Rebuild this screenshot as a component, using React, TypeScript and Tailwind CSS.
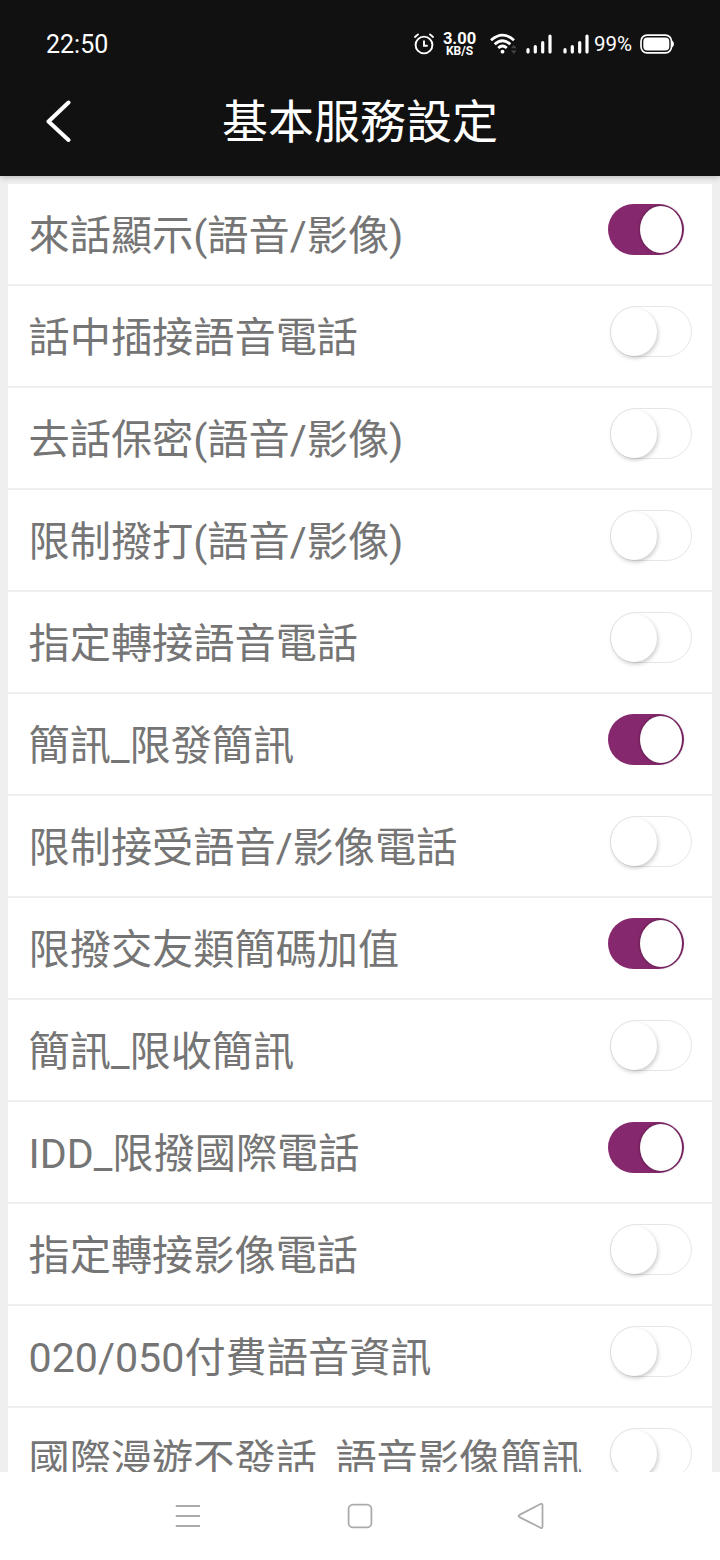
interface Service {
  id: number;
  name: string;
  enabled: boolean;
}

const services: Service[] = [
  { id: 1, name: "來話顯示(語音/影像)", enabled: true },
  { id: 2, name: "話中插接語音電話", enabled: false },
  { id: 3, name: "去話保密(語音/影像)", enabled: false },
  { id: 4, name: "限制撥打(語音/影像)", enabled: false },
  { id: 5, name: "指定轉接語音電話", enabled: false },
  { id: 6, name: "簡訊_限發簡訊", enabled: true },
  { id: 7, name: "限制接受語音/影像電話", enabled: false },
  { id: 8, name: "限撥交友類簡碼加值", enabled: true },
  { id: 9, name: "簡訊_限收簡訊", enabled: false },
  { id: 10, name: "IDD_限撥國際電話", enabled: true },
  { id: 11, name: "指定轉接影像電話", enabled: false },
  { id: 12, name: "020/050付費語音資訊", enabled: false },
  { id: 13, name: "國際漫遊不發話_語音影像簡訊", enabled: false },
];

function Signal() {
  return (
    <svg className="h-5 w-[26px]" viewBox="0 0 26 20" fill="none" stroke="white" strokeWidth="3.2" strokeLinecap="round">
      <path d="M2 15.5v2.5M9.3 12.5v5.5M16.7 8.5v9.5M24 2v16" />
    </svg>
  );
}

function StatusBar() {
  return (
    <div className="flex h-[88px] items-center pl-[46px] pr-[46px] text-white">
      <span className="text-[25px] leading-none">22:50</span>
      <div className="ml-auto flex items-center">
        <svg className="h-[22px] w-5" viewBox="0 0 20 22" fill="none" stroke="white" strokeWidth="1.9" strokeLinecap="round">
          <circle cx="10" cy="12" r="8.4" />
          <path d="M10 8.3v4.4h3M1 4l3-2.6M19 4l-3-2.6" />
        </svg>
        <div className="ml-2.5 flex w-8 flex-col items-center font-bold">
          <span className="text-[16.5px] leading-[14px]">3.00</span>
          <span className="text-[12px] leading-[11px]">KB/S</span>
        </div>
        <svg className="ml-[14px] h-[22px] w-[27px]" viewBox="0 0 27 22" fill="none" stroke="white" strokeWidth="2.8">
          <path d="M1 7.2Q12.5-3 24 7.2M4.7 11.2Q12.5 4.2 20.3 11.2M8.2 15Q12.5 11 16.8 15" />
          <circle cx="12.5" cy="18.7" r="1.9" fill="white" stroke="none" />
          <path d="m21 15.2 2.8-3.4 2.8 3.4ZM21 17.6l2.8 3.4 2.8-3.4Z" fill="#444" stroke="none" />
        </svg>
        <div className="ml-[9px] flex gap-[11.5px]">
          <Signal />
          <Signal />
        </div>
        <span className="ml-[5px] w-[41px] whitespace-nowrap text-[20.5px] leading-none">99%</span>
        <svg className="ml-[5px] h-5 w-[34px]" viewBox="0 0 34 20" fill="none">
          <rect x="1" y="1.2" width="30.5" height="17.6" rx="6" stroke="white" strokeWidth="1.7" />
          <rect x="3.3" y="3.6" width="26" height="12.8" rx="4" fill="white" />
          <path d="M32 6.5q2 1 2 3.5t-2 3.5Z" fill="white" />
        </svg>
      </div>
    </div>
  );
}

function Toggle({ enabled }: { enabled: boolean }) {
  if (enabled) {
    return (
      <div className="mr-[28.5px] flex h-[51px] w-[75.5px] items-center justify-end rounded-full bg-[#86286d] pr-0.5">
        <div className="h-[47px] w-[42px] rounded-[50%] bg-white shadow-[0_0_3px_#4a183c]" />
      </div>
    );
  }
  return (
    <div className="mr-5 flex h-[51px] w-[82px] items-center rounded-full border-[1.5px] border-[#e6e6e6] bg-white">
      <div className="h-12 w-[46px] shrink-0 rounded-[50%] bg-white shadow-[1px_2px_4px_rgba(0,0,0,0.22)]" />
    </div>
  );
}

export default function App() {
  return (
    <div className="flex h-[1560px] w-[720px] flex-col overflow-hidden bg-white font-['Roboto','Noto_Sans_CJK_TC',sans-serif]">
      <header className="z-10 h-44 shrink-0 bg-[#111111] text-white shadow-[0_1px_6px_rgba(0,0,0,0.25)]">
        <StatusBar />
        <div className="flex h-[66px] items-center justify-between px-[45px]">
          <svg className="h-[42px] w-[26px]" viewBox="0 0 26 42" fill="none" stroke="white" strokeWidth="4" strokeLinecap="round" strokeLinejoin="round">
            <path d="M23.5 2.5 3.5 21.5 23.5 40" />
          </svg>
          <h1 className="pt-0.5 text-[46px] leading-none">基本服務設定</h1>
          <div className="w-[26px]" />
        </div>
      </header>

      <main className="h-[1296px] shrink-0 overflow-hidden bg-[#efefef] px-2 pt-2">
        {services.map((service) => (
          <div key={service.id} className="flex h-[102px] justify-between border-b-2 border-[#eeeeee] bg-white pl-[20.5px]">
            <span className="whitespace-nowrap pt-[22px] text-[41.2px] leading-[60px] text-[#757575]">{service.name}</span>
            <div className="pt-5">
              <Toggle enabled={service.enabled} />
            </div>
          </div>
        ))}
      </main>

      <nav className="flex h-[88px] shrink-0 items-center justify-between bg-white px-[174px] text-[#ababab]">
        <svg className="h-7 w-[26px]" viewBox="0 0 26 28" fill="none" stroke="currentColor" strokeWidth="1.8" strokeLinecap="round">
          <path d="M2.5 4h23M2.5 14h23M2.5 24h23" />
        </svg>
        <svg className="h-7 w-[26px]" viewBox="0 0 26 28" fill="none" stroke="currentColor" strokeWidth="1.8">
          <rect x="1.6" y="2.6" width="22.8" height="22.8" rx="4.5" />
        </svg>
        <svg className="h-7 w-[26px] overflow-visible" viewBox="0 0 26 28" fill="none" stroke="currentColor" strokeWidth="1.8" strokeLinejoin="round">
          <path d="M20.5 2-.5 12.9q-1.8 1.1 0 2.2L20.5 25.8q2 .8 2-1.2V3.2q0-2-2-1.2Z" />
        </svg>
      </nav>
    </div>
  );
}
